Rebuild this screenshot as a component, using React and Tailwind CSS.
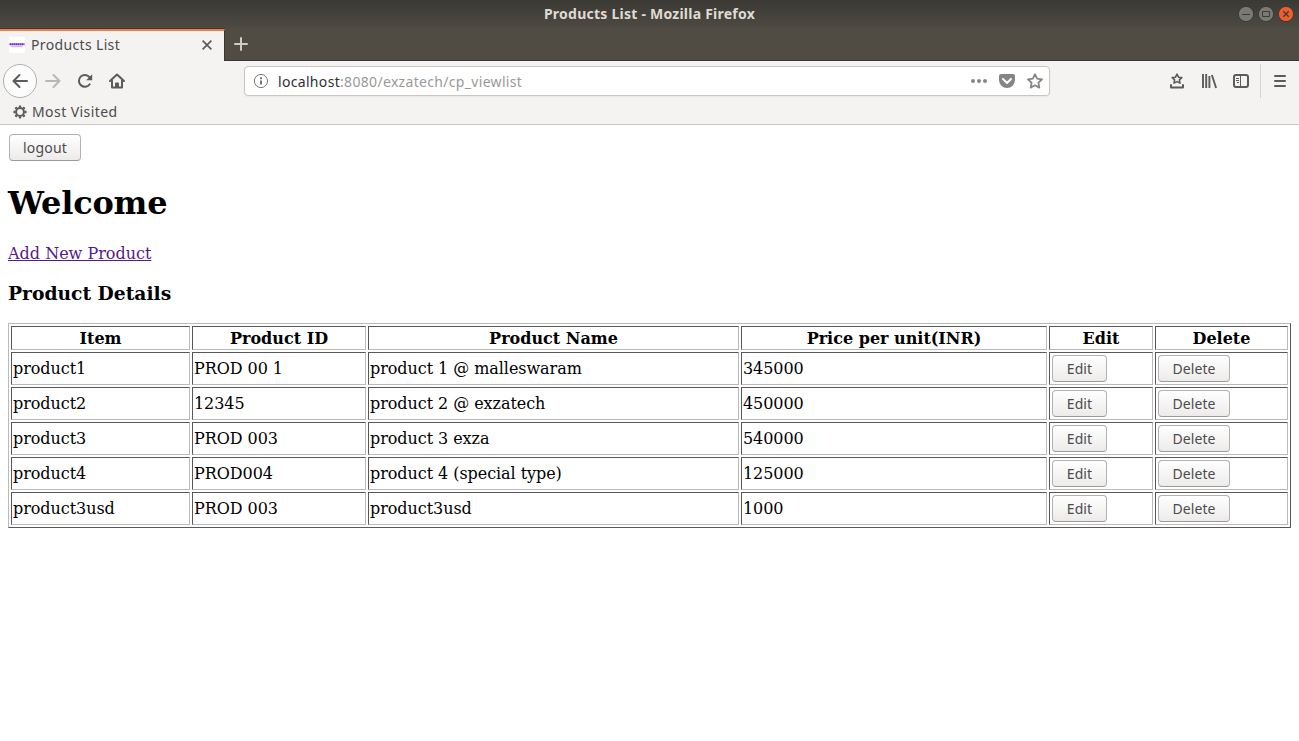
import React from 'react';

const products = [
  ['product1', 'PROD 00 1', 'product 1 @ malleswaram', '345000'],
  ['product2', '12345', 'product 2 @ exzatech', '450000'],
  ['product3', 'PROD 003', 'product 3 exza', '540000'],
  ['product4', 'PROD004', 'product 4 (special type)', '125000'],
  ['product3usd', 'PROD 003', 'product3usd', '1000'],
];
const headings = ['Item', 'Product ID', 'Product Name', 'Price per unit(INR)', 'Edit', 'Delete'];
const cell = 'border border-t-[#58585a] border-l-[#58585a] border-r-[#bababa] border-b-[#bababa] px-px flex items-center whitespace-nowrap';
const columns = 'grid grid-cols-[179px_174px_371px_306px_104px_133px] gap-x-[2px]';

function Icon({ className = 'size-4', children }) {
  return (
    <svg viewBox="0 0 16 16" fill="none" stroke="currentColor" strokeWidth="2" strokeLinecap="round" strokeLinejoin="round" className={`block shrink-0 ${className}`}>
      {children}
    </svg>
  );
}

function Button({ className, children }) {
  return (
    <button className={`h-[27px] shrink-0 rounded-[4px] border border-[#b4b2b0] border-b-[#9b9a98] bg-linear-to-b from-white to-[#edebea] font-['Noto_Sans',sans-serif] text-[14px] leading-[24px] text-[#4c4c4c] ${className}`}>
      {children}
    </button>
  );
}

function WindowControls() {
  return (
    <div className="flex gap-1 pr-[5px]">
      <svg viewBox="0 0 16 16" className="size-4">
        <circle cx="8" cy="8" r="7.6" fill="#7b7973" stroke="#35342f" strokeWidth=".8" />
        <path d="M4 8.5h8" stroke="#3c3b37" />
      </svg>
      <svg viewBox="0 0 16 16" className="size-4">
        <circle cx="8" cy="8" r="7.6" fill="#7b7973" stroke="#35342f" strokeWidth=".8" />
        <path d="M4.5 5.5h7v5h-7z" stroke="#3c3b37" fill="none" />
      </svg>
      <svg viewBox="0 0 16 16" className="size-4">
        <circle cx="8" cy="8" r="7.6" fill="#ee5d2c" stroke="#35342f" strokeWidth=".8" />
        <path d="M5.3 5.3l5.4 5.4M10.7 5.3l-5.4 5.4" stroke="#3c3b37" strokeWidth="1.3" />
      </svg>
    </div>
  );
}

function Chrome() {
  return (
    <header className="font-['Noto_Sans',sans-serif] text-[14px] text-[#4c4c4c]">
      <div className="grid h-7 grid-cols-[1fr_auto_1fr] items-center bg-linear-to-b from-[#3a3934] to-[#4d4a43]">
        <span />
        <span className="text-[14px] leading-7 font-bold tracking-[0.24px] text-[#dfdbd2]">Products List - Mozilla Firefox</span>
        <div className="flex justify-end"><WindowControls /></div>
      </div>
      <div className="flex h-[33px] border-b border-[#3a3631] bg-[#504c44]">
        <div className="-mb-px flex h-[33px] w-[225px] flex-col border-t border-[#3a3631]">
          <div className="flex h-8 items-center border-r border-[#3a3631] border-t-2 border-t-[#f07e52] bg-[#f4f3f2] pb-[2px] pl-[9px]">
            <svg viewBox="0 0 16 16" className="size-4">
              <path fill="#fff" d="M0 0h16v16H0z" />
              <path d="M.5 7.2h15" stroke="#6a22dc" strokeWidth="2" strokeDasharray="1.7 .3" />
              <path d="M2 9.6h12" stroke="#c58af0" strokeWidth=".7" />
            </svg>
            <span className="-mt-[2px] ml-[6px] w-[169px] tracking-[0.35px]">Products List</span>
            <Icon className="size-[14px] text-[#5b5b5a]"><path d="M3 3l10 10M13 3L3 13" strokeWidth="1.9" strokeLinecap="butt" /></Icon>
          </div>
        </div>
        <Icon className="mt-2 ml-2 size-4 text-[#d0ccc5]"><path d="M8 2v12M2 8h12" /></Icon>
      </div>
      <div className="h-16 border-b border-[#c8c5c2] bg-[#f4f3f2]">
        <div className="flex h-10 items-center text-[#5b5b5a]">
          <div className="ml-[3px] flex size-[34px] items-center justify-center rounded-full border border-[#b1afad] bg-[#fcfcfc]">
            <Icon><path d="M15 8H1.5M7.5 2L1.5 8l6 6" /></Icon>
          </div>
          <Icon className="ml-2 size-4 text-[#b8b7b5]"><path d="M1 8h13.5M8.5 2l6 6-6 6" /></Icon>
          <Icon className="ml-4 size-4"><path d="M12.7 11.2A5.9 5.9 0 1 1 12.4 4.1" /><path d="M15.2 1.2v6H9.2z" fill="currentColor" stroke="none" /></Icon>
          <Icon className="ml-4 size-4"><path d="M1 8l7-6.5L15 8M3 7.5V14.6h10V7.5" /><path d="M7 14.5v-4h2v4" strokeLinecap="butt" /></Icon>
          <div className="ml-[119px] flex h-[30px] w-[806px] items-center rounded-[4px] border border-[#c9c5c1] bg-white pl-2 shadow-xs">
            <Icon className="size-4 text-[#777]"><circle cx="8" cy="8" r="6.6" strokeWidth="1" /><path d="M8 7.5v4" strokeLinecap="butt" /><path d="M7 4.2h2v2H7z" fill="currentColor" stroke="none" /></Icon>
            <span className="ml-[9px] w-[693px] tracking-[0.32px] text-[#999]"><span className="text-[#303030]">localhost</span>:8080/exzatech/cp_viewlist</span>
            <Icon className="size-4 text-[#858585]"><g fill="currentColor" stroke="none"><circle cx="2" cy="8" r="2" /><circle cx="8" cy="8" r="2" /><circle cx="14" cy="8" r="2" /></g></Icon>
            <Icon className="ml-3 size-4 text-[#858585]"><path d="M2 1h12q2 0 2 2v4A8 8 0 0 1 0 7V3q0-2 2-2z" fill="currentColor" stroke="none" /><path d="M4 6l4 4 4-4" stroke="#fff" /></Icon>
            <Icon className="ml-3 size-4 text-[#858585]"><path d="M8 1.2l2.1 4.4 4.9.7-3.6 3.4.9 4.9L8 12.3l-4.3 2.3.9-4.9L1 6.3l4.9-.7z" strokeWidth="1.8" /></Icon>
          </div>
          <Icon className="ml-[119px] size-4"><path d="M8 1.2l1.5 3 3.3.4-2.4 2.3.6 3.2L8 8.6l-3 1.5.6-3.2-2.4-2.3 3.3-.4z" strokeWidth="1.6" /><path d="M2 12v2.6h12V12" /></Icon>
          <Icon className="ml-4 size-4"><path d="M2 1v14M5.2 1v14M8.4 3v12M10.9 2l4.2 13" strokeWidth="1.9" strokeLinecap="butt" /></Icon>
          <Icon className="ml-4 size-4"><rect x="1" y="2" width="14" height="12" rx="2" /><path d="M7.5 2v12" strokeWidth="1" /><path d="M3 5.5h3M3 7.5h3M4 9.5h2" strokeWidth="1" strokeLinecap="butt" /></Icon>
          <div className="ml-[11px] h-[34px] w-px bg-[#d6d4d2]" />
          <Icon className="ml-[11px] size-4"><path d="M3 3h10M3 8h10M3 13h10" /></Icon>
        </div>
        <div className="flex h-[22px] items-center pl-[13px]">
          <Icon className="size-[14px] text-[#5b5b5a]">
            <circle cx="8" cy="8" r="4.5" strokeWidth="2.3" />
            <path d="M8 .5v2.2M8 13.3v2.2M.5 8h2.2M13.3 8h2.2M2.7 2.7l1.5 1.5M11.8 11.8l1.5 1.5M2.7 13.3l1.5-1.5M11.8 4.2l1.5-1.5" strokeWidth="2.6" strokeLinecap="butt" />
          </Icon>
          <span className="-mt-[2px] ml-[5px] tracking-[0.42px]">Most Visited</span>
        </div>
      </div>
    </header>
  );
}

export default function App() {
  return (
    <div className="min-h-[741px] w-[1299px] bg-white">
      <Chrome />
      <main className="px-2 pt-[9px] font-['DejaVu_Serif',serif] text-[16px] leading-[19px] text-black">
        <Button className="ml-px block w-[72px] tracking-[0.2px]">logout</Button>
        <h1 className="mt-6 text-[32px] leading-[37px] font-bold tracking-[-0.22px]">Welcome</h1>
        <a className="mt-[22px] block w-fit text-[#551a8b] underline">Add New Product</a>
        <h3 className="mt-[19px] text-[18.72px] leading-[22px] font-bold">Product Details</h3>
        <div className="mt-[19px] flex w-[1283px] flex-col gap-[2px] border border-t-[#bababa] border-r-[#58585a] border-b-[#58585a] border-l-[#bababa] p-[2px]">
          <div className={`${columns} h-6`}>
            {headings.map((h) => <div key={h} className={`${cell} justify-center font-bold`}>{h}</div>)}
          </div>
          {products.map((row) => (
            <div key={row[0]} className={`${columns} h-[33px] tracking-[-0.06px]`}>
              {row.map((v, i) => <div key={i} className={cell}>{v}</div>)}
              <div className={cell}><Button className="ml-px w-[55px] tracking-[0.1px]">Edit</Button></div>
              <div className={cell}><Button className="ml-px w-[72px] tracking-[0.1px]">Delete</Button></div>
            </div>
          ))}
        </div>
      </main>
    </div>
  );
}
